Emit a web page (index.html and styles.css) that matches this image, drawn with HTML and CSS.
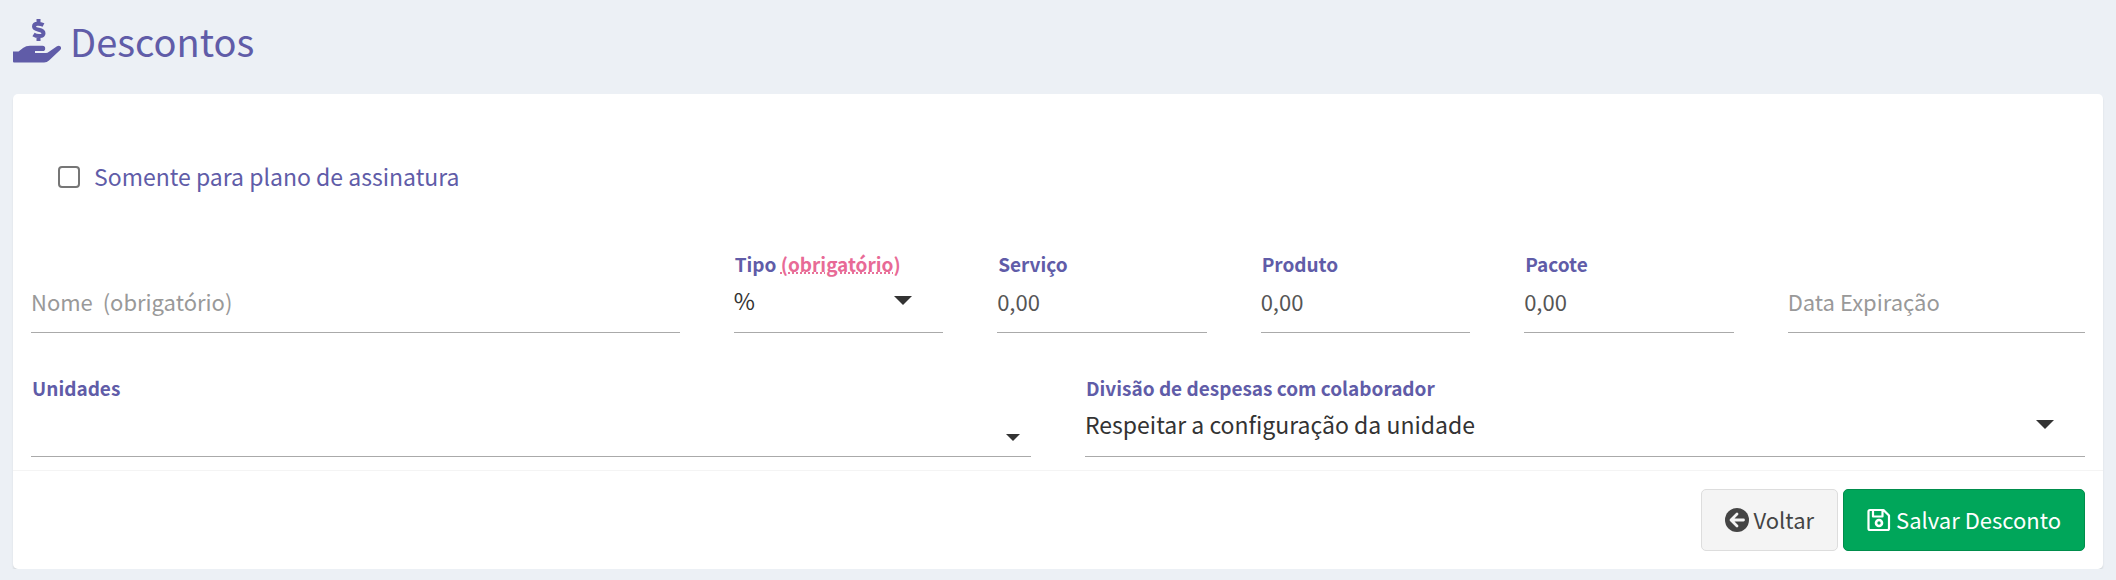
FILE: index.html
```html
<!DOCTYPE html>
<html lang="pt-BR">
<head>
    <meta charset="UTF-8">
    <meta name="viewport" content="width=device-width, initial-scale=1.0">
    <title>Descontos</title>
    <link rel="stylesheet" href="styles.css">
</head>
<body>
    <header class="page-header">
        <svg class="page-icon" viewBox="0 0 48 44" aria-hidden="true">
            <path d="M0 32.500h5.500l4.500-3.500q3-2.300 7-2.300h12.500a2.700 2.700 0 0 1 0 5.400H22v1.800h11q1.500 0 3-1.200l8-5.400c3-2 5.500 1.600 3.200 3.600L36 41.500q-2 2-5 2H1q-1 0-1-1z"/>
            <path class="dollar" d="M30.500 6c-3-1.500-9.500-2.500-9.500 1.500 0 4.500 9.500 2 9.500 6.700 0 4-7 3.300-10 1.300M25.500 0v4M25.500 17.500v4.500"/>
        </svg>
        <h1 class="page-title">Descontos</h1>
    </header>
    <form class="box">
        <div class="box-body">
            <div class="check">
                <input class="check-input" type="checkbox" id="somentePlano">
                <label class="check-label" for="somentePlano">Somente para plano de assinatura</label>
            </div>
            <div class="fields">
                <div class="field span-8">
                    <input class="control" type="text" id="nome" aria-label="Nome (obrigatório)" placeholder="Nome  (obrigatório)">
                </div>
                <div class="field span-3">
                    <label class="label" for="tipo">Tipo <abbr class="required">(obrigatório)</abbr></label>
                    <select class="control select" id="tipo">
                        <option>%</option>
                    </select>
                </div>
                <div class="field span-3">
                    <label class="label" for="servico">Serviço</label>
                    <input class="control" type="text" id="servico" value="0,00">
                </div>
                <div class="field span-3">
                    <label class="label" for="produto">Produto</label>
                    <input class="control" type="text" id="produto" value="0,00">
                </div>
                <div class="field span-3">
                    <label class="label" for="pacote">Pacote</label>
                    <input class="control" type="text" id="pacote" value="0,00">
                </div>
                <div class="field span-4">
                    <input class="control" type="text" id="dataExpiracao" aria-label="Data Expiração" placeholder="Data Expiração">
                </div>
                <div class="field span-12">
                    <label class="label" for="unidades">Unidades</label>
                    <select class="control select select-small" id="unidades">
                        <option></option>
                    </select>
                </div>
                <div class="field span-12">
                    <label class="label" for="divisao">Divisão de despesas com colaborador</label>
                    <select class="control select" id="divisao">
                        <option>Respeitar a configuração da unidade</option>
                    </select>
                </div>
            </div>
        </div>
        <div class="box-footer">
            <button class="btn btn-default" type="button">
                <svg class="btn-icon" viewBox="0 0 24 24" aria-hidden="true">
                    <circle cx="12" cy="12" r="12" fill="currentColor"/>
                    <path d="M12 6l-6 6 6 6M6.500 12H18.500" fill="none" stroke="#f4f4f4" stroke-width="2.800" stroke-linecap="round" stroke-linejoin="round"/>
                </svg>
                <span class="btn-text">Voltar</span>
            </button>
            <button class="btn btn-success" type="submit">
                <svg class="btn-icon" viewBox="0 0 24 24" aria-hidden="true">
                    <path d="M3 2h13.500l5.500 5.500v13q0 1.500-1.500 1.500h-17.500q-1.500 0-1.500-1.500V3.500q0-1.500 1.500-1.500zM6 2v6.500h9.500V2" fill="none" stroke="currentColor" stroke-width="2.200" stroke-linejoin="round"/>
                    <circle cx="12" cy="15" r="3" fill="none" stroke="currentColor" stroke-width="2.600"/>
                </svg>
                <span class="btn-text">Salvar Desconto</span>
            </button>
        </div>
    </form>
</body>
</html>
```
FILE: styles.css
```css
* {
    box-sizing: border-box;
}
body {
    margin: 0;
    padding: 0 13px;
    background: #ecf0f5;
    color: #333;
    font-family: "Noto Sans CJK SC", "Noto Sans", sans-serif;
    font-size: 22px;
    line-height: 32px;
}

/* Page title */
.page-header {
    display: flex;
    align-items: center;
    gap: 9px;
    height: 94px;
    padding-bottom: 12px;
    color: #605ca8;
}
.page-icon {
    width: 48px;
    height: 44px;
    fill: currentColor;
}
.dollar {
    fill: none;
    stroke: currentColor;
    stroke-width: 4;
}
.page-title {
    margin: 0;
    font-size: 38px;
    font-weight: 400;
    line-height: 48px;
}

/* White box */
.box {
    background: #fff;
    border-radius: 5px;
    box-shadow: 0 2px 2px rgba(0, 0, 0, .1);
}
.box-body {
    padding: 66px 18px 13px;
}
.check {
    display: flex;
    align-items: center;
    gap: 14px;
    padding-left: 27px;
}
.check-input {
    appearance: none;
    width: 22px;
    height: 22px;
    margin: 0;
    border: 2px solid #767676;
    border-radius: 4px;
    background: #fff;
}
.check-input:checked {
    background: #605ca8;
}
.check-label {
    padding-bottom: 2px;
    color: #605ca8;
    font-size: 23px;
}

/* Form grid */
.fields {
    display: grid;
    grid-template-columns: repeat(24, minmax(0, 1fr));
    column-gap: 54px;
    row-gap: 41px;
    margin-top: 56px;
}
.field {
    display: flex;
    flex-direction: column;
    justify-content: flex-end;
}
.span-3 {
    grid-column: span 3;
}
.span-4 {
    grid-column: span 4;
}
.span-8 {
    grid-column: span 8;
}
.span-12 {
    grid-column: span 12;
}
.label {
    padding-left: 1px;
    color: #605ca8;
    font-size: 19px;
    font-weight: 700;
    line-height: 28px;
}
.required {
    color: #e86a96;
    text-decoration: underline dotted;
}
.control {
    width: 100%;
    height: 55px;
    padding: 0 0 9px;
    border: 0;
    border-bottom: 1px solid #aaa;
    border-radius: 0;
    outline: none;
    background: transparent;
    color: #555;
    font: inherit;
}
.control::placeholder {
    color: #999;
}
.control:focus {
    border-bottom-color: #605ca8;
}
.select {
    appearance: none;
    padding-bottom: 11px;
    background: url("data:image/svg+xml,%3Csvg xmlns='http://www.w3.org/2000/svg' viewBox='0 0 18 9'%3E%3Cpath d='M0 0h18L9 9z' fill='%23333'/%3E%3C/svg%3E") no-repeat right 31px top 18px / 18px 9px;
    color: #333;
    font-size: 23px;
}
.select-small {
    background-position: right 11px top 32px;
    background-size: 14px 7px;
}

/* Actions */
.box-footer {
    display: flex;
    justify-content: flex-end;
    gap: 5px;
    padding: 18px;
    border-top: 1px solid #f4f4f4;
}
.btn {
    display: flex;
    align-items: center;
    gap: 5px;
    height: 62px;
    padding: 0 23px;
    border: 1px solid #ddd;
    border-radius: 5px;
    background: #f4f4f4;
    color: #444;
    font: inherit;
    cursor: pointer;
}
.btn-success {
    border-color: #008d4c;
    background: #00a65a;
    color: #fff;
}
.btn-icon {
    width: 24px;
    height: 24px;
}
.btn-text {
    padding-bottom: 2px;
}
```
